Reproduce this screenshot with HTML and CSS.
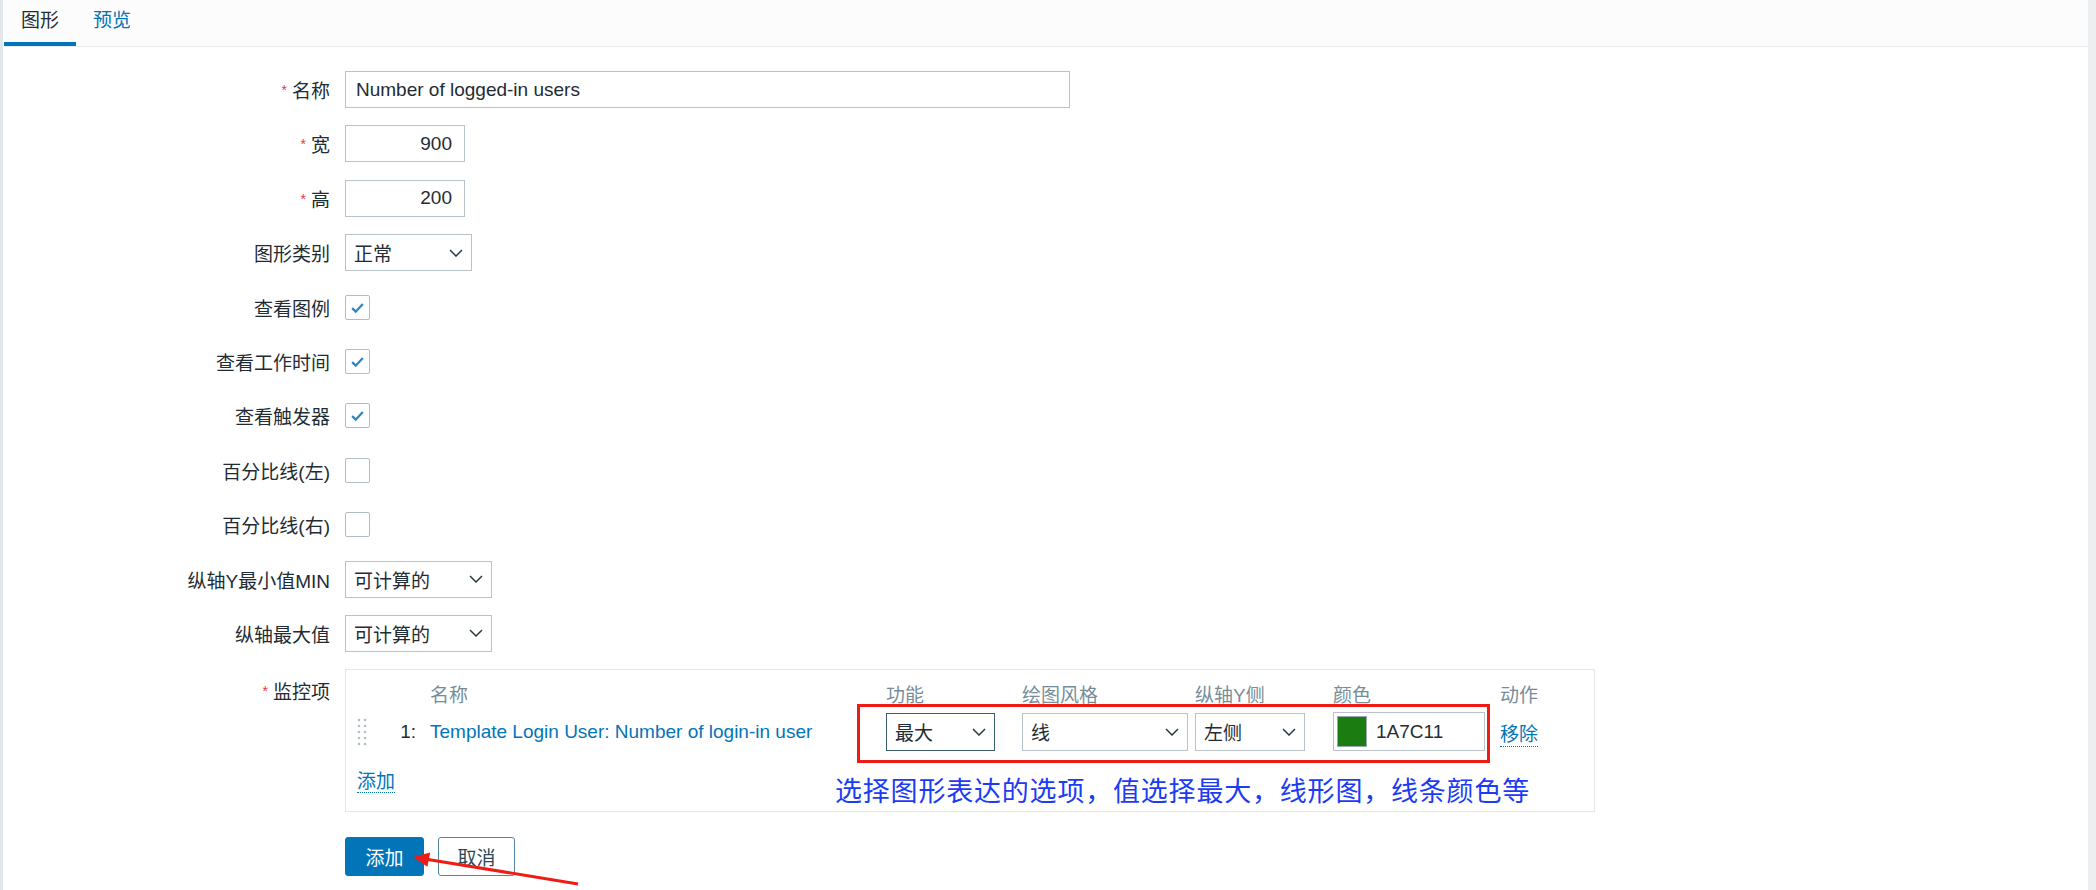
FILE: index.html
```html
<!DOCTYPE html>
<html lang="zh-CN">
<head>
  <meta charset="UTF-8">
  <title>图形</title>
  <link rel="stylesheet" href="styles.css">
</head>
<body>
  <div class="page">
    <div class="tabs">
      <span class="tab active">图形</span>
      <span class="tab">预览</span>
    </div>

    <form class="form-grid">
      <label class="req">名称</label>
      <div><input type="text" class="text name-input" value="Number of logged-in users"></div>

      <label class="req">宽</label>
      <div><input type="text" class="text num-input" value="900"></div>

      <label class="req">高</label>
      <div><input type="text" class="text num-input" value="200"></div>

      <label>图形类别</label>
      <div>
        <div class="select type-select"><span>正常</span><svg class="chev" viewBox="0 0 14 8"><path d="M1 1l6 6 6-6"/></svg></div>
      </div>

      <label>查看图例</label>
      <div><span class="check on"><svg viewBox="0 0 16 16"><path d="M3.5 8.5l3 3 6-6.5"/></svg></span></div>

      <label>查看工作时间</label>
      <div><span class="check on"><svg viewBox="0 0 16 16"><path d="M3.5 8.5l3 3 6-6.5"/></svg></span></div>

      <label>查看触发器</label>
      <div><span class="check on"><svg viewBox="0 0 16 16"><path d="M3.5 8.5l3 3 6-6.5"/></svg></span></div>

      <label>百分比线(左)</label>
      <div><span class="check"></span></div>

      <label>百分比线(右)</label>
      <div><span class="check"></span></div>

      <label>纵轴Y最小值MIN</label>
      <div>
        <div class="select axis-select"><span>可计算的</span><svg class="chev" viewBox="0 0 14 8"><path d="M1 1l6 6 6-6"/></svg></div>
      </div>

      <label>纵轴最大值</label>
      <div>
        <div class="select axis-select"><span>可计算的</span><svg class="chev" viewBox="0 0 14 8"><path d="M1 1l6 6 6-6"/></svg></div>
      </div>

      <label class="req top">监控项</label>
      <div class="items">
        <div class="items-row items-head">
          <span></span>
          <span></span>
          <span>名称</span>
          <span>功能</span>
          <span>绘图风格</span>
          <span>纵轴Y侧</span>
          <span>颜色</span>
          <span>动作</span>
        </div>
        <div class="items-row items-data">
          <span class="drag">
            <svg viewBox="0 0 10 28">
              <circle cx="2" cy="2" r="1.3"/><circle cx="8" cy="2" r="1.3"/>
              <circle cx="2" cy="8" r="1.3"/><circle cx="8" cy="8" r="1.3"/>
              <circle cx="2" cy="14" r="1.3"/><circle cx="8" cy="14" r="1.3"/>
              <circle cx="2" cy="20" r="1.3"/><circle cx="8" cy="20" r="1.3"/>
              <circle cx="2" cy="26" r="1.3"/><circle cx="8" cy="26" r="1.3"/>
            </svg>
          </span>
          <span class="num">1:</span>
          <a class="item-link" href="#">Template Login User: Number of login-in user</a>
          <div class="select func-select focused"><span>最大</span><svg class="chev" viewBox="0 0 14 8"><path d="M1 1l6 6 6-6"/></svg></div>
          <div class="select style-select"><span>线</span><svg class="chev" viewBox="0 0 14 8"><path d="M1 1l6 6 6-6"/></svg></div>
          <div class="select side-select"><span>左侧</span><svg class="chev" viewBox="0 0 14 8"><path d="M1 1l6 6 6-6"/></svg></div>
          <div class="color-box"><span class="swatch"></span><span>1A7C11</span></div>
          <a class="dotted remove" href="#">移除</a>
        </div>
        <div class="items-add"><a class="dotted" href="#">添加</a></div>

        <div class="mark-box"></div>
        <p class="note">选择图形表达的选项，值选择最大，线形图，线条颜色等</p>
      </div>

      <span></span>
      <div class="buttons">
        <button type="button" class="btn">添加</button>
        <button type="button" class="btn btn-alt">取消</button>
      </div>
    </form>

    <svg class="arrow" viewBox="0 0 190 45">
      <line x1="178" y1="39" x2="28" y2="14.5"/>
      <polygon points="13,12 30.2,7.4 27.4,21.7"/>
    </svg>
  </div>
</body>
</html>
```

FILE: styles.css
```css
* {
  margin: 0;
  padding: 0;
  box-sizing: border-box;
}

body {
  background-color: #ffffff;
  color: #1f2c33;
  font-family: "Liberation Sans", "Noto Sans CJK SC", sans-serif;
  font-size: 19px;
}

.page {
  position: relative;
  min-height: 100vh;
  border-left: 3px solid #e4e7ea;
  border-right: 8px solid #eceef0;
}

/* tabs */
.tabs {
  display: flex;
  height: 47px;
  padding-left: 1px;
  background-color: #fcfcfc;
  border-bottom: 1px solid #e8ebed;
}

.tab {
  padding: 0 17px 0 17px;
  line-height: 42px;
  height: 46px;
  color: #0275b8;
  border-bottom: 4px solid transparent;
}

.tab.active {
  color: #1f2c33;
  border-bottom-color: #0275b8;
}

/* form */
.form-grid {
  display: grid;
  grid-template-columns: 327px 1fr;
  grid-auto-rows: minmax(37px, auto);
  column-gap: 15px;
  row-gap: 17.4px;
  align-items: center;
  padding-top: 24px;
}

.form-grid > label {
  text-align: right;
  white-space: nowrap;
}

.form-grid > label.top {
  align-self: start;
  padding-top: 8px;
}

.req::before {
  content: "*";
  color: #e33734;
  font-size: 14px;
  margin-right: 5px;
  vertical-align: 3px;
}

.text {
  height: 37px;
  border: 1px solid #b7c3c9;
  background: #ffffff;
  color: #1f2c33;
  font-family: inherit;
  font-size: 19px;
  padding: 0 10px;
  outline: none;
}

.name-input {
  width: 725px;
}

.num-input {
  width: 120px;
  text-align: right;
  padding-right: 12px;
}

.select {
  display: flex;
  align-items: center;
  justify-content: space-between;
  height: 37px;
  border: 1px solid #b7c3c9;
  background: #ffffff;
  padding: 0 8px 0 8px;
}

.chev {
  width: 14px;
  height: 8px;
  fill: none;
  stroke: #2b3940;
  stroke-width: 1.5;
}

.type-select {
  width: 127px;
}

.axis-select {
  width: 147px;
}

.check {
  display: flex;
  align-items: center;
  justify-content: center;
  width: 25px;
  height: 25px;
  border: 1px solid #b2bec5;
  border-radius: 2px;
  background: #ffffff;
}

.check svg {
  width: 19px;
  height: 19px;
  fill: none;
  stroke: #2d86c2;
  stroke-width: 1.9;
}

/* items table */
.items {
  position: relative;
  width: 1250px;
  border: 1px solid #e3e7ea;
  padding: 10px 11px 18px;
}

.items-row {
  display: grid;
  grid-template-columns: 30px 43px 456px 136px 173px 138px 167px auto;
  align-items: center;
}

.items-head {
  height: 24px;
  color: #768d99;
}

.items-data {
  margin-top: 8px;
  height: 38px;
}

.drag svg {
  display: block;
  width: 10px;
  height: 28px;
  fill: #b4bfc5;
}

.num {
  text-align: right;
  padding-right: 14px;
}

.item-link {
  color: #0275b8;
  text-decoration: none;
}

.items-data .select {
  height: 38px;
}

.func-select {
  width: 109px;
}

.func-select.focused {
  border-color: #3b5f72;
}

.style-select {
  width: 166px;
}

.side-select {
  width: 110px;
}

.color-box {
  display: flex;
  align-items: center;
  gap: 9px;
  width: 152px;
  height: 39px;
  border: 1px solid #b7c3c9;
  padding-left: 3px;
}

.swatch {
  width: 30px;
  height: 31px;
  background-color: #1a7c11;
  border: 1px solid #9aa7ad;
}

.dotted {
  color: #0275b8;
  text-decoration: none;
  border-bottom: 1px dotted #0275b8;
  justify-self: start;
  line-height: 22px;
}

.remove {
  margin-top: 8px;
}

.items-add {
  margin-top: 21px;
  height: 22px;
}

/* annotation */
.mark-box {
  position: absolute;
  left: 511px;
  top: 34px;
  width: 633px;
  height: 59px;
  border: 3px solid #f01a14;
}

.note {
  position: absolute;
  left: 489px;
  top: 105px;
  font-size: 27px;
  line-height: 30px;
  letter-spacing: 0.8px;
  color: #1b3bf5;
  font-family: "Noto Sans CJK SC", sans-serif;
  white-space: nowrap;
}

/* buttons */
.buttons {
  display: flex;
  gap: 14px;
  margin-top: 7px;
}

.btn {
  height: 39px;
  width: 79px;
  border: 1px solid #0275b8;
  border-radius: 3px;
  background-color: #0275b8;
  color: #ffffff;
  font-family: inherit;
  font-size: 19px;
  cursor: pointer;
}

.btn-alt {
  width: 77px;
  background-color: #ffffff;
  color: #2e4756;
  border-color: #4f86a6;
}

.arrow {
  position: absolute;
  left: 397px;
  top: 845px;
  width: 190px;
  height: 45px;
}

.arrow line {
  stroke: #ee1c16;
  stroke-width: 3;
}

.arrow polygon {
  fill: #ee1c16;
}
```
